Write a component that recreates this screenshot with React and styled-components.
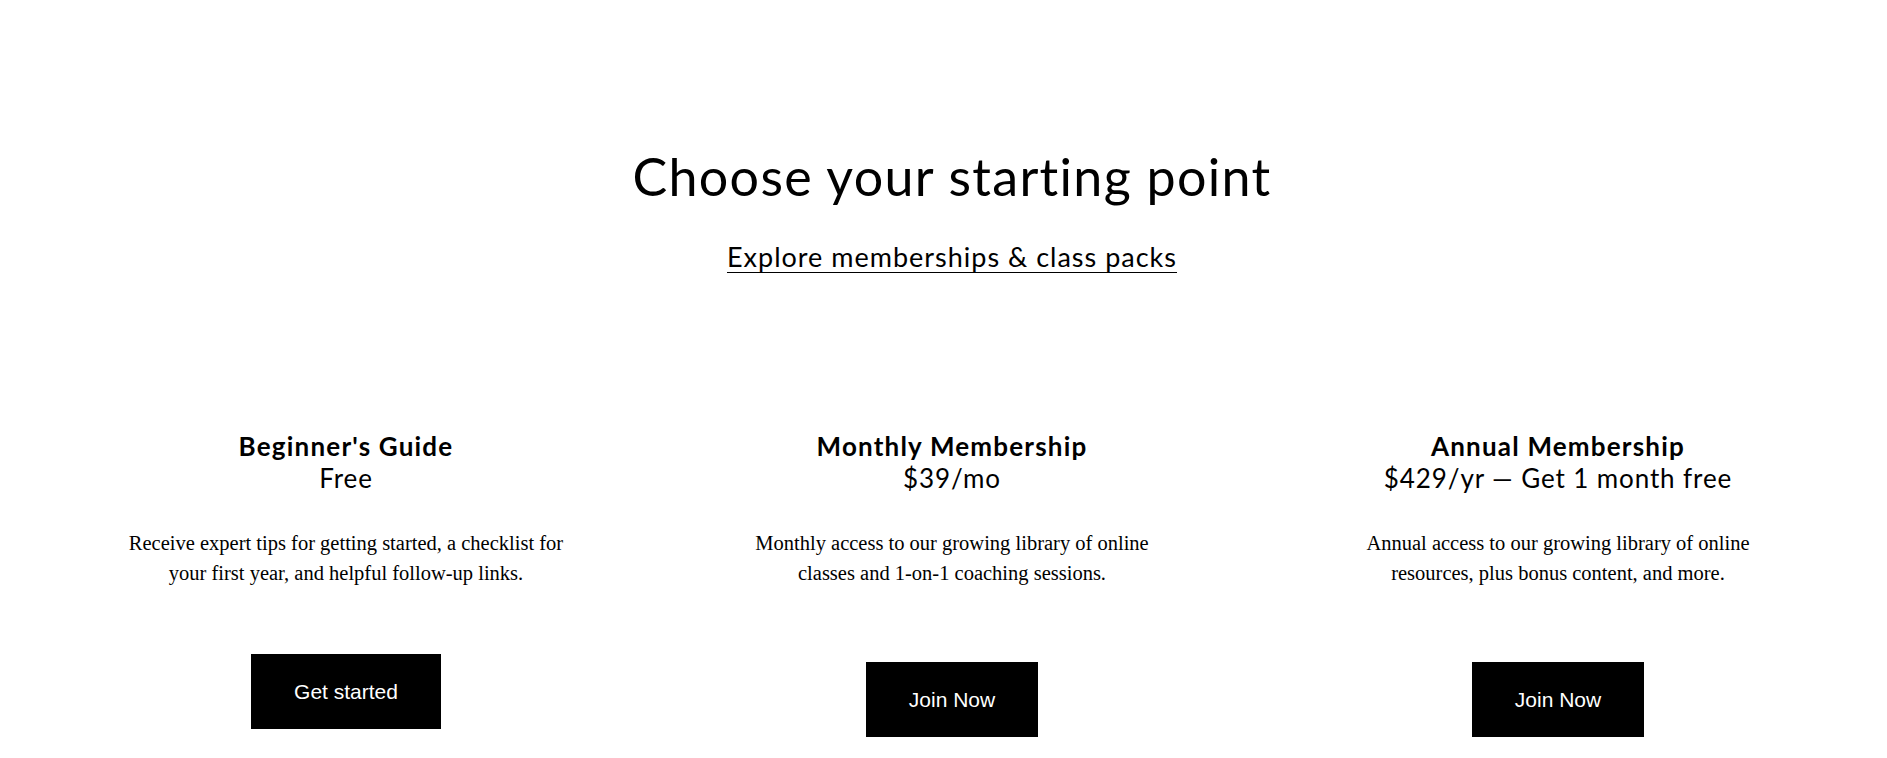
import React from 'react';
import styled, { createGlobalStyle } from 'styled-components';

const GlobalStyle = createGlobalStyle`
  html, body {
    margin: 0;
    padding: 0;
    background: #ffffff;
    color: #000000;
  }
  * {
    box-sizing: border-box;
  }
`;

const Page = styled.main`
  min-height: 758px;
  padding: 146px 26px 0 43px;
  background: #ffffff;
`;

const Header = styled.header`
  display: flex;
  flex-direction: column;
  align-items: center;
`;

const Title = styled.h1`
  margin: 0;
  font-family: Lato, 'Noto Sans', sans-serif;
  font-weight: 400;
  font-size: 52px;
  line-height: 60px;
  letter-spacing: 1.3px;
  color: #000;
`;

const SubLink = styled.a`
  margin-top: 35px;
  font-family: Lato, 'Noto Sans', sans-serif;
  font-size: 27px;
  line-height: 31px;
  color: #000;
  text-decoration: underline;
  text-decoration-thickness: 1px;
  text-underline-offset: 5px;
  letter-spacing: 1px;
`;

const Plans = styled.section`
  display: grid;
  grid-template-columns: repeat(3, 1fr);
  margin-top: 158px;
`;

const Plan = styled.article`
  display: flex;
  flex-direction: column;
  align-items: center;
  text-align: center;
`;

const PlanName = styled.h3`
  margin: 0;
  font-family: Lato, 'Noto Sans', sans-serif;
  font-weight: 700;
  font-size: 26px;
  line-height: 32px;
  letter-spacing: 1.2px;
  color: #000;
`;

const Price = styled.div`
  font-family: Lato, 'Noto Sans', sans-serif;
  font-weight: 400;
  font-size: 26px;
  line-height: 32px;
  letter-spacing: 0.9px;
  color: #000;
`;

const Description = styled.p`
  margin: 34px 0 0;
  max-width: 446px;
  font-family: 'Liberation Serif', 'Times New Roman', serif;
  font-size: 20.5px;
  line-height: 30px;
  color: #000;
`;

const ActionButton = styled.button`
  margin-top: ${(p) => p.$offset}px;
  padding: 0 43px;
  height: 75px;
  border: none;
  border-radius: 0;
  background: #000;
  color: #fff;
  font-family: 'Liberation Sans', Arial, sans-serif;
  font-size: 21px;
  cursor: pointer;
`;

const plans = [
  {
    name: "Beginner's Guide",
    price: 'Free',
    text: 'Receive expert tips for getting started, a checklist for your first year, and helpful follow-up links.',
    action: 'Get started',
    offset: 66,
  },
  {
    name: 'Monthly Membership',
    price: '$39/mo',
    text: 'Monthly access to our growing library of online classes and 1-on-1 coaching sessions.',
    action: 'Join Now',
    offset: 74,
  },
  {
    name: 'Annual Membership',
    price: '$429/yr — Get 1 month free',
    text: 'Annual access to our growing library of online resources, plus bonus content, and more.',
    action: 'Join Now',
    offset: 74,
  },
];

function App() {
  return (
    <>
      <GlobalStyle />
      <Page>
        <Header>
          <Title>Choose your starting point</Title>
          <SubLink href="#">Explore memberships &amp; class packs</SubLink>
        </Header>

        <Plans>
          {plans.map((plan) => (
            <Plan key={plan.name}>
              <PlanName>{plan.name}</PlanName>
              <Price>{plan.price}</Price>
              <Description>{plan.text}</Description>
              <ActionButton type="button" $offset={plan.offset}>
                {plan.action}
              </ActionButton>
            </Plan>
          ))}
        </Plans>
      </Page>
    </>
  );
}

export default App;
